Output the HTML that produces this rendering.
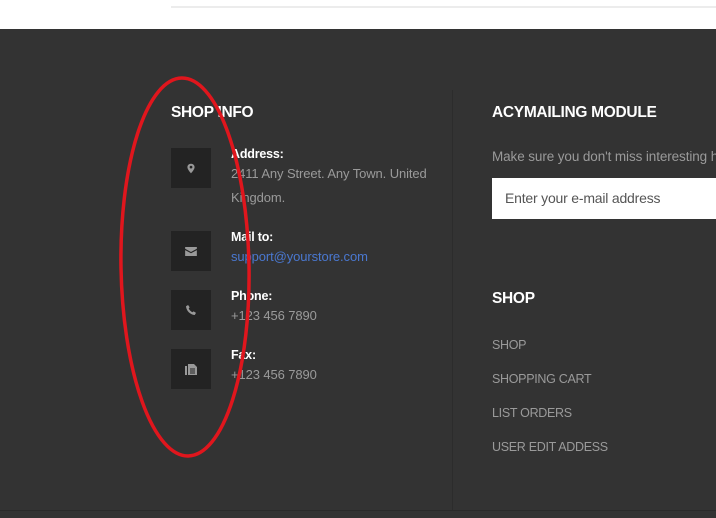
<!DOCTYPE html>
<html><head><meta charset="utf-8"><style>
*{margin:0;padding:0;box-sizing:border-box}
html,body{width:716px;height:518px;overflow:hidden}
body{background:#fff;font-family:"Liberation Sans",Arial,sans-serif;position:relative}
#wrap{position:absolute;left:0;top:0;width:716px;height:518px;overflow:hidden}
.topline{position:absolute;left:171px;right:0;top:6px;height:2px;background:#ececec}
.foot{position:absolute;left:0;top:29px;width:716px;height:489px;background:#333}
.bline{position:absolute;left:0;top:510px;width:716px;height:1px;background:#2a2a2a}
.vdiv{position:absolute;left:452px;top:90px;width:1px;height:420px;background:#2c2c2c}
.h{position:absolute;color:#fff;font-weight:bold;font-size:15.5px;letter-spacing:-0.3px}
.box{position:absolute;left:171px;width:40px;height:40px;background:#232323;display:flex;align-items:center;justify-content:center}
.lbl{position:absolute;left:231px;color:#fff;font-weight:bold;font-size:12.5px;letter-spacing:-0.2px}
.txt{position:absolute;left:231px;color:#9a9a9a;font-size:13px;line-height:24px;letter-spacing:-0.1px}
.lnk{position:absolute;left:492px;color:#9a9a9a;font-size:12.5px;letter-spacing:-0.3px}
.inp{position:absolute;left:492px;top:178px;width:224px;height:41px;background:#fff;padding-left:13px;font-size:14px;line-height:41px;color:#555;white-space:nowrap;letter-spacing:-0.2px}
</style></head><body><div id="wrap">
<div class="topline"></div>
<div class="foot"></div>
<div class="bline"></div>
<div class="vdiv"></div>
<div class="h" style="left:171px;top:104px">SHOP INFO</div>
<div class="box" style="top:148px"><svg width="8" height="11" viewBox="0 0 10 12"><path d="M5 0C2.3 0 .5 2 .5 4.3 .5 7.3 5 12 5 12s4.5-4.7 4.5-7.7C9.5 2 7.7 0 5 0zm0 6a1.7 1.7 0 110-3.4A1.7 1.7 0 015 6z" fill="#999"/></svg></div>
<div class="lbl" style="top:147px">Address:</div>
<div class="txt" style="top:162px;width:205px">2411 Any Street. Any Town. United Kingdom.</div>
<div class="box" style="top:231px"><svg width="12" height="9" viewBox="0 0 13 10"><path d="M0 0h13v2L6.5 5.5 0 2z M0 3.5l6.5 3.5 6.5-3.5V10H0z" fill="#999"/></svg></div>
<div class="lbl" style="top:230px">Mail to:</div>
<div class="txt" style="top:245px;color:#4a78d0">support@yourstore.com</div>
<div class="box" style="top:290px"><svg width="10" height="10" viewBox="0 0 11 11"><path d="M2.3 0L4 2.5 3 4c.8 1.6 2.2 3 4 4l1.4-1L11 8.7 9.6 11C4.5 10.6.4 6.5 0 1.4z" fill="#999"/></svg></div>
<div class="lbl" style="top:289px">Phone:</div>
<div class="txt" style="top:304px">+123 456 7890</div>
<div class="box" style="top:349px"><svg width="12" height="12" viewBox="0 0 12 12"><path d="M0 3h2v9H0z M3 1h6l3 3v8H3z" fill="#999"/><path d="M5 6h5M5 8h5M5 10h5" stroke="#232323" stroke-width="1"/></svg></div>
<div class="lbl" style="top:348px">Fax:</div>
<div class="txt" style="top:363px">+123 456 7890</div>
<div class="h" style="left:492px;top:104px">ACYMAILING MODULE</div>
<div class="txt" style="left:492px;top:145px;font-size:13.5px;white-space:nowrap">Make sure you don't miss interesting happenings</div>
<div class="inp">Enter your e-mail address</div>
<div class="h" style="left:492px;top:290px">SHOP</div>
<div class="lnk" style="top:338px">SHOP</div>
<div class="lnk" style="top:372px">SHOPPING CART</div>
<div class="lnk" style="top:406px">LIST ORDERS</div>
<div class="lnk" style="top:440px">USER EDIT ADDESS</div>
<svg style="position:absolute;left:0;top:0" width="716" height="518"><ellipse cx="185" cy="267" rx="64" ry="189" fill="none" stroke="#e0161d" stroke-width="3.5" transform="rotate(-1 185 267)"/></svg>
</div></body></html>
